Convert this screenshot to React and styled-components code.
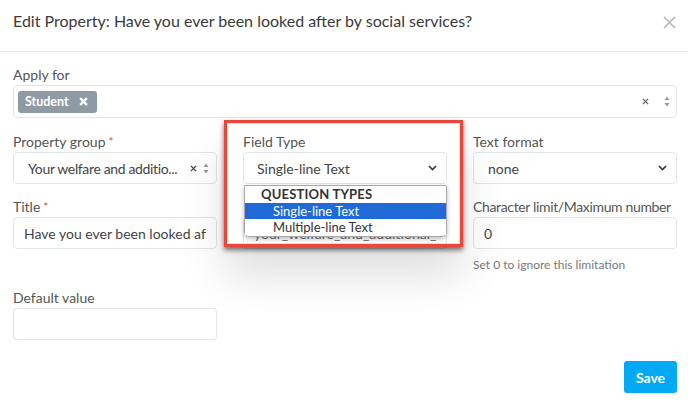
import React from 'react'
import styled, { createGlobalStyle } from 'styled-components'

const GlobalStyle = createGlobalStyle`
  html, body {
    margin: 0;
    padding: 0;
    background: #fff;
  }
  body {
    font-family: Lato, "Open Sans", sans-serif;
    color: #333;
  }
`

const Modal = styled.div`
  width: 688px;
  height: 404px;
  position: relative;
  overflow: hidden;
  background: #fff;
`

const Header = styled.div`
  height: 52px;
  border-bottom: 1px solid #e6e9ec;
  display: flex;
  align-items: center;
  justify-content: space-between;
  padding: 0 12px 10px 13px;
  box-sizing: border-box;
`

const HeaderTitle = styled.h1`
  margin: 0;
  font-size: 16px;
  font-weight: 400;
  color: #3a3a3a;
`

const CloseButton = styled.button`
  border: 0;
  background: none;
  padding: 0;
  width: 13px;
  height: 13px;
  display: flex;
  margin-top: 4px;
  cursor: pointer;
`

const Body = styled.div`
  padding: 15px 11px 0 13px;
`

const Label = styled.label`
  display: block;
  font-size: 14px;
  line-height: 16px;
  color: #555;
  margin-bottom: 2px;
  white-space: nowrap;
  letter-spacing: ${props => (props.tight ? '-0.35px' : 'normal')};
`

const Required = styled.span`
  color: #e74c3c;
  margin-left: 3px;
  font-size: 12px;
  vertical-align: top;
`

const Box = styled.div`
  height: ${props => (props.tall ? '33px' : '32px')};
  box-sizing: border-box;
  border: 1px solid #dfe5ea;
  border-radius: 4px;
  background: #fff;
  display: flex;
  align-items: center;
  padding: 0 ${props => props.pr ?? 10}px 0 ${props => props.pl ?? 10}px;
  font-size: 14px;
  color: #444;
  overflow: hidden;
  white-space: nowrap;
  gap: ${props => props.gap ?? 8}px;
`

const BoxText = styled.span`
  flex: ${props => (props.fixed ? 'none' : '1')};
  overflow: hidden;
  white-space: nowrap;
  color: ${props => (props.muted ? '#666' : '#444')};
  letter-spacing: ${props => (props.tight ? '-0.35px' : 'normal')};
`

const Tag = styled.span`
  display: inline-flex;
  align-items: center;
  gap: 10px;
  height: 22px;
  padding: 0 9px 0 7px;
  border-radius: 3px;
  background: #8e9ba5;
  color: #fff;
  font-size: 12.5px;
  font-weight: 700;
`

const Grid = styled.div`
  display: grid;
  grid-template-columns: 204px 204px 204px;
  column-gap: 26px;
  margin-top: 16px;
`

const Field = styled.div`
  margin-bottom: ${props => props.mb ?? 15}px;
`

const Help = styled.div`
  font-size: 12px;
  color: #777;
  margin-top: 8px;
`

const Footer = styled.div`
  display: flex;
  justify-content: flex-end;
  margin-top: 21px;
  width: 664px;
`

const SaveButton = styled.button`
  width: 53px;
  height: 32px;
  border: 0;
  border-radius: 3px;
  background: #03a9f4;
  color: #fff;
  font-family: Lato, sans-serif;
  font-weight: 700;
  font-size: 14px;
`

const Highlight = styled.div`
  position: absolute;
  left: 224px;
  top: 120px;
  width: 239px;
  height: 127px;
  box-sizing: border-box;
  border: 3px solid #e8473a;
  box-shadow: inset 0 0 0 1px #e2e2e2, 0 3px 5px rgba(0, 0, 0, 0.55),
    0 30px 40px rgba(0, 0, 0, 0.12);
  pointer-events: none;
`

const Menu = styled.div`
  position: absolute;
  left: 244px;
  top: 185px;
  width: 203px;
  box-sizing: border-box;
  border: 1px solid #a9a9a9;
  border-radius: 0 0 5px 5px;
  background: #fff;
  box-shadow: 0 2px 5px rgba(0, 0, 0, 0.25);
  padding-bottom: 1px;
  font-size: 13px;
`

const MenuGroup = styled.div`
  font-weight: 700;
  color: #333;
  padding-left: 16px;
  height: 17px;
  line-height: 17px;
  letter-spacing: 0.2px;
`

const MenuItem = styled.div`
  height: 16px;
  line-height: 16px;
  padding-left: 28px;
  background: ${props => (props.active ? '#1f6ad6' : '#fff')};
  color: ${props => (props.active ? '#fff' : '#333')};
`

const Spacer = styled.span`
  flex: ${props => (props.w ? 'none' : '1')};
  width: ${props => (props.w ? `${props.w}px` : 'auto')};
`

const Chevron = () => (
  <svg width="9" height="6" viewBox="0 0 9 6">
    <path d="M1 1l3.5 3.5L8 1" fill="none" stroke="#333" strokeWidth="1.6" />
  </svg>
)

const UpDown = () => (
  <svg width="6" height="11" viewBox="0 0 6 11">
    <path d="M3 0.5L5.5 4H0.5z" fill="#999" />
    <path d="M3 10.5L5.5 7H0.5z" fill="#999" />
  </svg>
)

const SmallX = ({ color = '#555', size = 7, w = 1.5 }) => (
  <svg width={size} height={size} viewBox="0 0 8 8">
    <path d="M1 1l6 6M7 1L1 7" stroke={color} strokeWidth={w} />
  </svg>
)

export default function App() {
  return (
    <Modal>
      <GlobalStyle />
      <Header>
        <HeaderTitle>
          Edit Property: Have you ever been looked after by social services?
        </HeaderTitle>
        <CloseButton aria-label="close">
          <svg width="13" height="13" viewBox="0 0 13 13">
            <path d="M1 1l11 11M12 1L1 12" stroke="#b5b5b5" strokeWidth="1.6" />
          </svg>
        </CloseButton>
      </Header>
      <Body>
        <Label>Apply for</Label>
        <Box tall pl={4} pr={6} gap={0}>
          <Tag>
            Student
            <SmallX color="#fff" size={9} w={2} />
          </Tag>
          <Spacer />
          <SmallX color="#666" size={7} />
          <Spacer w={15} />
          <UpDown />
        </Box>

        <Grid>
          <Field>
            <Label>
              Property group<Required>*</Required>
            </Label>
            <Box pl={14} pr={7} gap={6}>
              <BoxText fixed tight>
                Your welfare and additio...
              </BoxText>
              <Spacer />
              <SmallX color="#444" size={7} />
              <UpDown />
            </Box>
          </Field>
          <Field>
            <Label>Field Type</Label>
            <Box pl={13} pr={9}>
              <BoxText>Single-line Text</BoxText>
              <Chevron />
            </Box>
          </Field>
          <Field>
            <Label>Text format</Label>
            <Box pl={14} pr={9}>
              <BoxText>none</BoxText>
              <Chevron />
            </Box>
          </Field>

          <Field mb={18}>
            <Label>
              Title<Required>*</Required>
            </Label>
            <Box pl={10}>
              <BoxText>Have you ever been looked after by social services?</BoxText>
            </Box>
          </Field>
          <Field mb={18}>
            <Label>Property key</Label>
            <Box pl={10}>
              <BoxText muted>your_welfare_and_additional_services</BoxText>
            </Box>
          </Field>
          <Field mb={18}>
            <Label tight>Character limit/Maximum number</Label>
            <Box pl={10}>
              <BoxText>0</BoxText>
            </Box>
            <Help>Set 0 to ignore this limitation</Help>
          </Field>

          <Field mb={0}>
            <Label>Default value</Label>
            <Box />
          </Field>
        </Grid>

        <Footer>
          <SaveButton>Save</SaveButton>
        </Footer>
      </Body>

      <Highlight />
      <Menu>
        <MenuGroup>QUESTION TYPES</MenuGroup>
        <MenuItem active>Single-line Text</MenuItem>
        <MenuItem>Multiple-line Text</MenuItem>
      </Menu>
    </Modal>
  )
}
